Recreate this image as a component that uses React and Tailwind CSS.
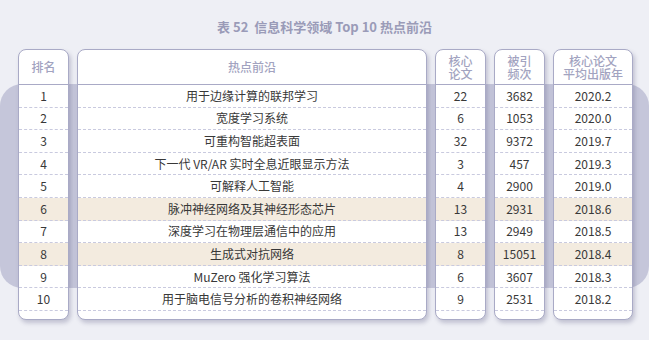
const rows = [
  ["1", "用于边缘计算的联邦学习", "22", "3682", "2020.2"],
  ["2", "宽度学习系统", "6", "1053", "2020.0"],
  ["3", "可重构智能超表面", "32", "9372", "2019.7"],
  ["4", "下一代 VR/AR 实时全息近眼显示方法", "3", "457", "2019.3"],
  ["5", "可解释人工智能", "4", "2900", "2019.0"],
  ["6", "脉冲神经网络及其神经形态芯片", "13", "2931", "2018.6"],
  ["7", "深度学习在物理层通信中的应用", "13", "2949", "2018.5"],
  ["8", "生成式对抗网络", "8", "15051", "2018.4"],
  ["9", "MuZero 强化学习算法", "6", "3607", "2018.3"],
  ["10", "用于脑电信号分析的卷积神经网络", "9", "2531", "2018.2"],
];

const columns = [
  { title: ["排名"], width: "w-[51px]" },
  { title: ["热点前沿"], width: "w-[350px]" },
  { title: ["核心", "论文"], width: "w-[51px]" },
  { title: ["被引", "频次"], width: "w-[51px]" },
  { title: ["核心论文", "平均出版年"], width: "w-[80px]" },
];

function Column({ col, index }) {
  return (
    <div
      className={`${col.width} h-[271px] flex flex-col bg-white border border-[#a9aac6] rounded-[8px] overflow-hidden shadow-[2px_3px_4px_rgba(90,90,130,0.3)]`}
    >
      <div className="h-[35px] shrink-0 flex flex-col items-center justify-center border-b-[1.5px] border-[#a9aac6] text-[12px] leading-[13.5px] font-medium text-[#a2a3c0]">
        {col.title.map((t) => (
          <span key={t}>{t}</span>
        ))}
      </div>
      {rows.map((row, i) => (
        <div
          key={i}
          className={`h-[22.6px] shrink-0 flex items-center justify-center border-b border-dashed border-[#c9cadf] text-[12px] text-[#383838] ${
            i === 5 || i === 7 ? "bg-[#f3ebdf]" : "bg-white"
          }`}
        >
          {row[index]}
        </div>
      ))}
      <div className="flex-1" />
    </div>
  );
}

export default function App() {
  return (
    <div
      className="relative w-[649px] h-[340px] overflow-hidden bg-[#eeeff5]"
      style={{ fontFamily: '"Noto Sans CJK SC", "Noto Sans", sans-serif' }}
    >
      <div className="absolute left-0 right-0 top-[84px] h-[204px] rounded-[22px] bg-[#c5c6da]" />
      <h1 className="relative pt-[17px] h-[49px] text-center text-[13px] leading-[20px] font-bold text-[#9a9bb8]">
        表 52&nbsp; 信息科学领域 Top 10 热点前沿
      </h1>
      <div className="relative flex pl-[18px] gap-[8px]">
        {columns.map((col, i) => (
          <Column key={i} col={col} index={i} />
        ))}
      </div>
    </div>
  );
}
